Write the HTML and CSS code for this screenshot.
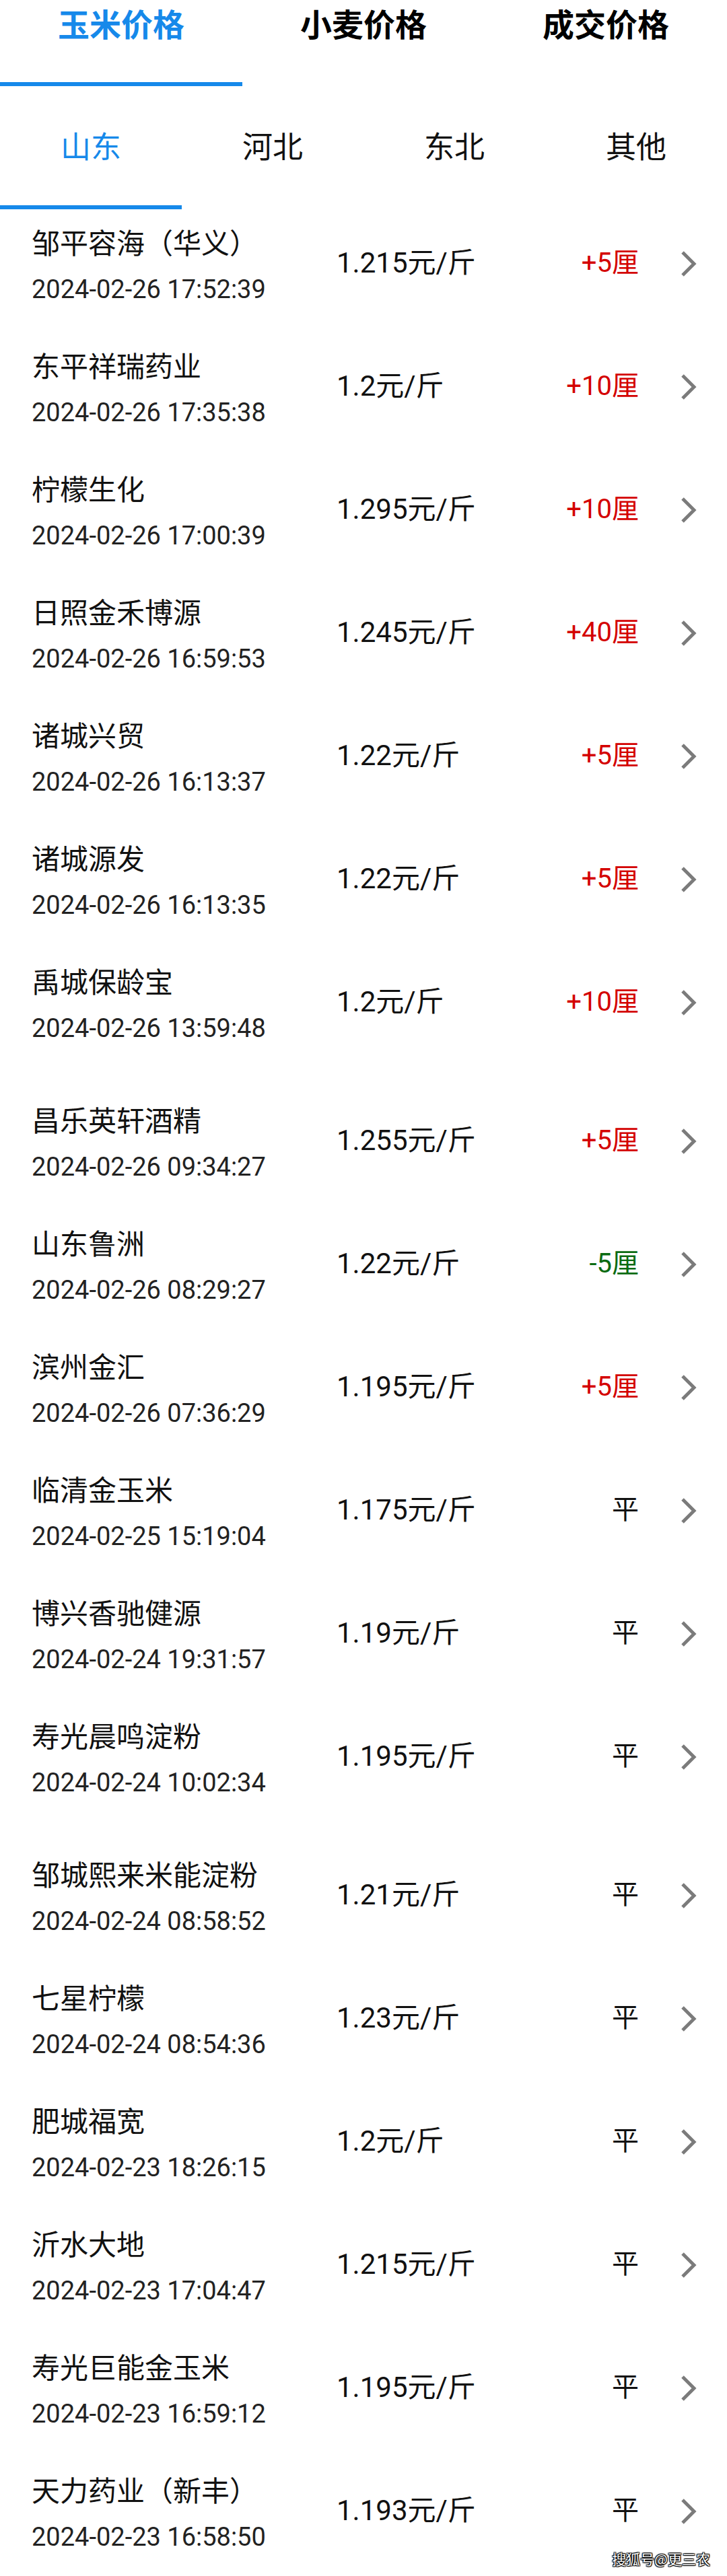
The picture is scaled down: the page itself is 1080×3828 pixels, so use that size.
FILE: index.html
```html
<!DOCTYPE html>
<html lang="zh-CN">
<head>
<meta charset="utf-8">
<title>玉米价格</title>
<link rel="stylesheet" href="styles.css">
</head>
<body>
<div class="page">
  <nav class="tabs">
    <div class="tab active">玉米价格</div>
    <div class="tab">小麦价格</div>
    <div class="tab">成交价格</div>
  </nav>
  <nav class="subtabs">
    <div class="subtab active">山东</div>
    <div class="subtab">河北</div>
    <div class="subtab">东北</div>
    <div class="subtab">其他</div>
  </nav>
  <ul class="list">
    <li class="row"><div class="info"><div class="name">邹平容海（华义）</div><div class="date">2024-02-26 17:52:39</div></div><div class="price">1.215元/斤</div><div class="change up">+5厘</div><svg class="chev" viewBox="0 0 24 40"><polyline points="3,3 20,20 3,37"/></svg></li>
    <li class="row"><div class="info"><div class="name">东平祥瑞药业</div><div class="date">2024-02-26 17:35:38</div></div><div class="price">1.2元/斤</div><div class="change up">+10厘</div><svg class="chev" viewBox="0 0 24 40"><polyline points="3,3 20,20 3,37"/></svg></li>
    <li class="row"><div class="info"><div class="name">柠檬生化</div><div class="date">2024-02-26 17:00:39</div></div><div class="price">1.295元/斤</div><div class="change up">+10厘</div><svg class="chev" viewBox="0 0 24 40"><polyline points="3,3 20,20 3,37"/></svg></li>
    <li class="row"><div class="info"><div class="name">日照金禾博源</div><div class="date">2024-02-26 16:59:53</div></div><div class="price">1.245元/斤</div><div class="change up">+40厘</div><svg class="chev" viewBox="0 0 24 40"><polyline points="3,3 20,20 3,37"/></svg></li>
    <li class="row"><div class="info"><div class="name">诸城兴贸</div><div class="date">2024-02-26 16:13:37</div></div><div class="price">1.22元/斤</div><div class="change up">+5厘</div><svg class="chev" viewBox="0 0 24 40"><polyline points="3,3 20,20 3,37"/></svg></li>
    <li class="row"><div class="info"><div class="name">诸城源发</div><div class="date">2024-02-26 16:13:35</div></div><div class="price">1.22元/斤</div><div class="change up">+5厘</div><svg class="chev" viewBox="0 0 24 40"><polyline points="3,3 20,20 3,37"/></svg></li>
    <li class="row"><div class="info"><div class="name">禹城保龄宝</div><div class="date">2024-02-26 13:59:48</div></div><div class="price">1.2元/斤</div><div class="change up">+10厘</div><svg class="chev" viewBox="0 0 24 40"><polyline points="3,3 20,20 3,37"/></svg></li>
    <li class="row gap"><div class="info"><div class="name">昌乐英轩酒精</div><div class="date">2024-02-26 09:34:27</div></div><div class="price">1.255元/斤</div><div class="change up">+5厘</div><svg class="chev" viewBox="0 0 24 40"><polyline points="3,3 20,20 3,37"/></svg></li>
    <li class="row"><div class="info"><div class="name">山东鲁洲</div><div class="date">2024-02-26 08:29:27</div></div><div class="price">1.22元/斤</div><div class="change down">-5厘</div><svg class="chev" viewBox="0 0 24 40"><polyline points="3,3 20,20 3,37"/></svg></li>
    <li class="row"><div class="info"><div class="name">滨州金汇</div><div class="date">2024-02-26 07:36:29</div></div><div class="price">1.195元/斤</div><div class="change up">+5厘</div><svg class="chev" viewBox="0 0 24 40"><polyline points="3,3 20,20 3,37"/></svg></li>
    <li class="row"><div class="info"><div class="name">临清金玉米</div><div class="date">2024-02-25 15:19:04</div></div><div class="price">1.175元/斤</div><div class="change">平</div><svg class="chev" viewBox="0 0 24 40"><polyline points="3,3 20,20 3,37"/></svg></li>
    <li class="row"><div class="info"><div class="name">博兴香驰健源</div><div class="date">2024-02-24 19:31:57</div></div><div class="price">1.19元/斤</div><div class="change">平</div><svg class="chev" viewBox="0 0 24 40"><polyline points="3,3 20,20 3,37"/></svg></li>
    <li class="row"><div class="info"><div class="name">寿光晨鸣淀粉</div><div class="date">2024-02-24 10:02:34</div></div><div class="price">1.195元/斤</div><div class="change">平</div><svg class="chev" viewBox="0 0 24 40"><polyline points="3,3 20,20 3,37"/></svg></li>
    <li class="row gap"><div class="info"><div class="name">邹城熙来米能淀粉</div><div class="date">2024-02-24 08:58:52</div></div><div class="price">1.21元/斤</div><div class="change">平</div><svg class="chev" viewBox="0 0 24 40"><polyline points="3,3 20,20 3,37"/></svg></li>
    <li class="row"><div class="info"><div class="name">七星柠檬</div><div class="date">2024-02-24 08:54:36</div></div><div class="price">1.23元/斤</div><div class="change">平</div><svg class="chev" viewBox="0 0 24 40"><polyline points="3,3 20,20 3,37"/></svg></li>
    <li class="row"><div class="info"><div class="name">肥城福宽</div><div class="date">2024-02-23 18:26:15</div></div><div class="price">1.2元/斤</div><div class="change">平</div><svg class="chev" viewBox="0 0 24 40"><polyline points="3,3 20,20 3,37"/></svg></li>
    <li class="row"><div class="info"><div class="name">沂水大地</div><div class="date">2024-02-23 17:04:47</div></div><div class="price">1.215元/斤</div><div class="change">平</div><svg class="chev" viewBox="0 0 24 40"><polyline points="3,3 20,20 3,37"/></svg></li>
    <li class="row"><div class="info"><div class="name">寿光巨能金玉米</div><div class="date">2024-02-23 16:59:12</div></div><div class="price">1.195元/斤</div><div class="change">平</div><svg class="chev" viewBox="0 0 24 40"><polyline points="3,3 20,20 3,37"/></svg></li>
    <li class="row"><div class="info"><div class="name">天力药业（新丰）</div><div class="date">2024-02-23 16:58:50</div></div><div class="price">1.193元/斤</div><div class="change">平</div><svg class="chev" viewBox="0 0 24 40"><polyline points="3,3 20,20 3,37"/></svg></li>
  </ul>
  <div class="watermark">搜狐号@更三农</div>
</div>
</body>
</html>
```
FILE: styles.css
```css
html, body {
  margin: 0;
  padding: 0;
  background: #ffffff;
}

body {
  font-family: "Noto Sans CJK SC", "Noto Sans", sans-serif;
  color: #111111;
}

.page {
  position: relative;
  width: 1080px;
  height: 3828px;
  overflow: hidden;
}

/* top tabs */
.tabs {
  display: grid;
  grid-template-columns: repeat(3, 1fr);
}

.tab {
  height: 128px;
  box-sizing: border-box;
  padding-top: 10px;
  text-align: center;
  font-size: 47px;
  line-height: 47px;
  font-weight: 700;
  color: #000000;
  border-bottom: 6px solid transparent;
}

.tab.active {
  color: #1689ea;
  border-bottom-color: #1689ea;
}

/* region tabs */
.subtabs {
  display: grid;
  grid-template-columns: repeat(4, 1fr);
}

.subtab {
  height: 183px;
  box-sizing: border-box;
  padding-top: 65px;
  text-align: center;
  font-size: 45px;
  line-height: 45px;
  color: #111111;
  border-bottom: 6px solid transparent;
}

.subtab.active {
  color: #1689ea;
  border-bottom-color: #1689ea;
}

/* list */
.list {
  list-style: none;
  margin: 0;
  padding: 0;
}

.row {
  display: grid;
  grid-template-columns: 453px 1fr auto 131px;
  align-items: center;
  height: 183px;
  box-sizing: border-box;
  padding: 23px 0 0 47px;
  align-content: start;
}

.row.gap {
  margin-top: 23px;
}

.info {
  display: flex;
  flex-direction: column;
}

.name {
  font-size: 42px;
  line-height: 50px;
  color: #111111;
  white-space: nowrap;
}

.date {
  margin-top: 24px;
  font-family: Roboto, "Noto Sans CJK SC", sans-serif;
  font-size: 38px;
  line-height: 44px;
  color: #222222;
  white-space: nowrap;
}

.price {
  font-family: Roboto, "Noto Sans CJK SC", sans-serif;
  font-size: 42px;
  line-height: 50px;
  color: #111111;
  margin-bottom: 5px;
  white-space: nowrap;
}

.change {
  justify-self: end;
  font-family: Roboto, "Noto Sans CJK SC", sans-serif;
  font-size: 40px;
  line-height: 50px;
  color: #111111;
  margin-bottom: 4px;
  white-space: nowrap;
}

.change.up {
  color: #d40000;
}

.change.down {
  color: #0b6b12;
}

.chev {
  width: 24px;
  height: 40px;
  margin-left: 62px;
  margin-bottom: 3px;
}

.chev polyline {
  fill: none;
  stroke: #7b7b7b;
  stroke-width: 5;
  stroke-linecap: butt;
  stroke-linejoin: miter;
}

/* watermark overlay */
.watermark {
  position: absolute;
  right: 25px;
  bottom: 15px;
  font-size: 21px;
  line-height: 21px;
  color: #ffffff;
  text-shadow: 0 0 1px #000, 1px 1px 1px #000, -1px -1px 1px #000, 1px -1px 1px #000, -1px 1px 1px #000;
}
```
